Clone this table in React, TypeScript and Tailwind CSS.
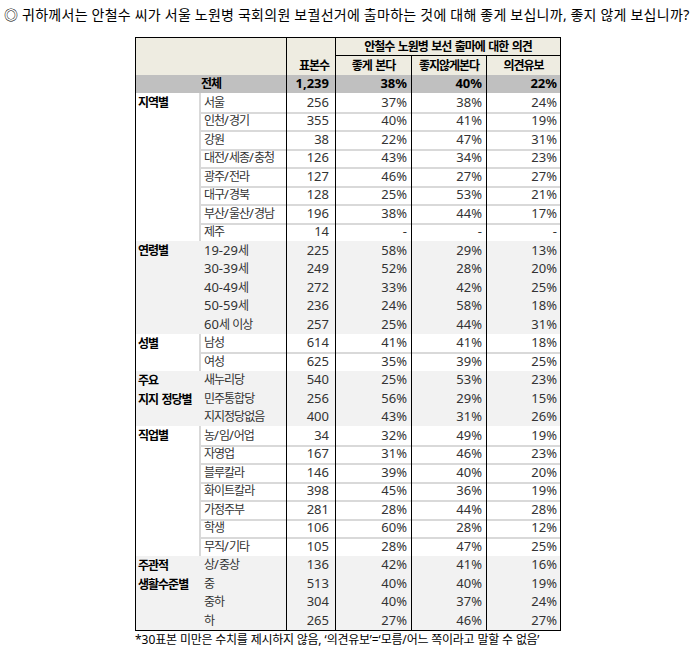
import React from "react";

type Row = [string, string, string, string, string];
type Group = { label: string[]; gray: boolean; rows: Row[] };

const groups: Group[] = [
  {
    label: ["지역별"],
    gray: false,
    rows: [
      ["서울", "256", "37%", "38%", "24%"],
      ["인천/경기", "355", "40%", "41%", "19%"],
      ["강원", "38", "22%", "47%", "31%"],
      ["대전/세종/충청", "126", "43%", "34%", "23%"],
      ["광주/전라", "127", "46%", "27%", "27%"],
      ["대구/경북", "128", "25%", "53%", "21%"],
      ["부산/울산/경남", "196", "38%", "44%", "17%"],
      ["제주", "14", "-", "-", "-"],
    ],
  },
  {
    label: ["연령별"],
    gray: true,
    rows: [
      ["19-29세", "225", "58%", "29%", "13%"],
      ["30-39세", "249", "52%", "28%", "20%"],
      ["40-49세", "272", "33%", "42%", "25%"],
      ["50-59세", "236", "24%", "58%", "18%"],
      ["60세 이상", "257", "25%", "44%", "31%"],
    ],
  },
  {
    label: ["성별"],
    gray: false,
    rows: [
      ["남성", "614", "41%", "41%", "18%"],
      ["여성", "625", "35%", "39%", "25%"],
    ],
  },
  {
    label: ["주요", "지지 정당별"],
    gray: true,
    rows: [
      ["새누리당", "540", "25%", "53%", "23%"],
      ["민주통합당", "256", "56%", "29%", "15%"],
      ["지지정당없음", "400", "43%", "31%", "26%"],
    ],
  },
  {
    label: ["직업별"],
    gray: false,
    rows: [
      ["농/임/어업", "34", "32%", "49%", "19%"],
      ["자영업", "167", "31%", "46%", "23%"],
      ["블루칼라", "146", "39%", "40%", "20%"],
      ["화이트칼라", "398", "45%", "36%", "19%"],
      ["가정주부", "281", "28%", "44%", "28%"],
      ["학생", "106", "60%", "28%", "12%"],
      ["무직/기타", "105", "28%", "47%", "25%"],
    ],
  },
  {
    label: ["주관적", "생활수준별"],
    gray: true,
    rows: [
      ["상/중상", "136", "42%", "41%", "16%"],
      ["중", "513", "40%", "40%", "19%"],
      ["중하", "304", "40%", "37%", "24%"],
      ["하", "265", "27%", "46%", "27%"],
    ],
  },
];

function K({ s, k = "text-[12px] tracking-[-1px]" }: { s: string; k?: string }) {
  const parts = s.split(/([\uAC00-\uD7A3◎]+)/);
  return (
    <span className="whitespace-pre">
      {parts.map((p, i) =>
        /[\uAC00-\uD7A3◎]/.test(p) ? (
          <span key={i} className={k}>
            {p}
          </span>
        ) : (
          <React.Fragment key={i}>{p}</React.Fragment>
        )
      )}
    </span>
  );
}

function DataRow({ r, first, gray }: { r: Row; first: boolean; gray: boolean }) {
  const line = !gray && !first ? "shadow-[inset_0_2px_0_#d9d9d9]" : "";
  return (
    <div className="flex h-[18.5px] text-[#333]">
      <div
        className={`w-[87px] border-l-2 pl-[3px] flex items-center whitespace-nowrap ${
          gray ? "border-transparent" : "border-[#d9d9d9]"
        } ${line}`}
      >
        <K s={r[0]} />
      </div>
      <div className={`w-[49px] border-l border-black flex items-center justify-end pr-[6px] ${line}`}>{r[1]}</div>
      <div className={`w-[76px] border-l border-black flex items-center justify-end pr-[4px] ${line}`}>{r[2]}</div>
      <div className={`w-[75px] border-l border-black flex items-center justify-end pr-[4px] ${line}`}>{r[3]}</div>
      <div className={`w-[75px] border-l border-r border-black flex items-center justify-end pr-[3px] ${line}`}>
        {r[4]}
      </div>
    </div>
  );
}

export default function App() {
  return (
    <div className="w-[698px] h-[654px] bg-white overflow-hidden text-[13px] text-black font-['Noto_Sans','Noto_Sans_CJK_KR',sans-serif]">
      <div className="h-[37px] pl-[4px] pt-[5px] leading-[20px] whitespace-nowrap text-[14px]">
        <K
          s="◎ 귀하께서는 안철수 씨가 서울 노원병 국회의원 보궐선거에 출마하는 것에 대해 좋게 보십니까, 좋지 않게 보십니까?"
          k="text-[14px] tracking-[0.3px]"
        />
      </div>

      <div className="ml-[135px] w-[426px]">
        {/* header */}
        <div className="flex h-[38px] border-t border-black bg-[#eeece1] font-bold">
          <div className="w-[151px] border-l border-black" />
          <div className="w-[49px] border-l border-black flex items-end justify-end pr-[6px] leading-[19px]">
            <K s="표본수" />
          </div>
          <div className="w-[226px] border-l border-r border-black flex flex-col">
            <div className="h-[18px] border-b border-black flex items-center justify-center whitespace-nowrap">
              <K s="안철수 노원병 보선 출마에 대한 의견" />
            </div>
            <div className="flex h-[19px]">
              <div className="w-[75px] flex items-center justify-center whitespace-nowrap">
                <K s="좋게 본다" />
              </div>
              <div className="w-[75px] border-l border-black flex items-center justify-center whitespace-nowrap">
                <K s="좋지않게본다" />
              </div>
              <div className="w-[74px] border-l border-black flex items-center justify-center whitespace-nowrap">
                <K s="의견유보" />
              </div>
            </div>
          </div>
        </div>

        {/* total */}
        <div className="flex h-[18px] bg-[#c0c0c0] font-bold text-black">
          <div className="w-[151px] border-l border-black flex items-center justify-center">
            <K s="전체" />
          </div>
          <div className="w-[49px] border-l border-black flex items-center justify-end pr-[6px]">1,239</div>
          <div className="w-[76px] border-l border-black flex items-center justify-end pr-[4px]">38%</div>
          <div className="w-[75px] border-l border-black flex items-center justify-end pr-[4px]">40%</div>
          <div className="w-[75px] border-l border-r border-black flex items-center justify-end pr-[3px]">22%</div>
        </div>

        {/* groups */}
        <div className="border-b border-black">
          {groups.map((g, gi) => (
            <div key={gi} className={`flex ${g.gray ? "bg-[#f2f2f2]" : "bg-white"}`}>
              <div className="w-[64px] border-l border-black pl-[2px] font-bold text-black leading-[18.5px] whitespace-nowrap">
                {g.label.map((l, li) => (
                  <div key={li}>
                    <K s={l} />
                  </div>
                ))}
              </div>
              <div className="flex flex-col">
                {g.rows.map((r, ri) => (
                  <DataRow key={ri} r={r} first={ri === 0} gray={g.gray} />
                ))}
              </div>
            </div>
          ))}
        </div>
      </div>

      <div className="ml-[135px] mt-[1px] text-[12px] leading-[16px] whitespace-nowrap">
        <K
          s="*30표본 미만은 수치를 제시하지 않음, ‘의견유보’=‘모름/어느 쪽이라고 말할 수 없음’"
          k="text-[12px] tracking-[-0.3px]"
        />
      </div>
    </div>
  );
}
